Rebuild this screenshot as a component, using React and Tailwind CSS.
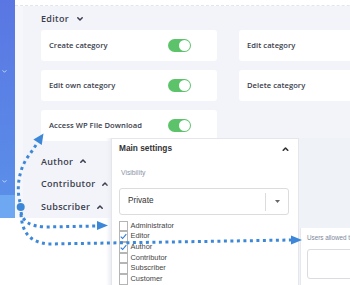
import React from "react";

function Chevron({ up = false, className = "", color = "#3b3e4e", w = 6, h = 4, sw = 1.5 }) {
  return (
    <svg width={w} height={h} viewBox="0 0 6 4" className={className} fill="none">
      {up ? (
        <path d="M0.8 3.3 L3 1 L5.2 3.3" stroke={color} strokeWidth={sw} strokeLinecap="round" strokeLinejoin="round" />
      ) : (
        <path d="M0.8 0.8 L3 3 L5.2 0.8" stroke={color} strokeWidth={sw} strokeLinecap="round" strokeLinejoin="round" />
      )}
    </svg>
  );
}

function Toggle() {
  return (
    <div className="w-[23px] h-[13px] rounded-full bg-[#5cc36b] flex items-center justify-end pr-[1px]">
      <div className="w-[11px] h-[11px] rounded-full bg-white" />
    </div>
  );
}

function Card({ label, toggle }) {
  return (
    <div className="h-[31px] bg-white rounded-[3px] flex items-center justify-between pl-[8px] pr-[26px]">
      <span className="text-[7.6px] font-semibold text-[#3a3d4c] tracking-[0.05px]">{label}</span>
      {toggle && <Toggle />}
    </div>
  );
}

function RoleRow({ label }) {
  return (
    <div className="h-[22.7px] flex items-center">
      <span className="text-[9px] font-semibold text-[#3b3e4e] tracking-[0.3px]">{label}</span>
      <Chevron up className="ml-[7px]" />
    </div>
  );
}

function Check({ label, checked }) {
  return (
    <div className="h-[10.7px] shrink-0 flex items-center">
      <div className="w-[9px] h-[10.7px] border border-[#b5b5b5] bg-white flex items-center justify-center shrink-0 -mb-[1px]">
        {checked && (
          <svg width="8" height="7" viewBox="0 0 8 7" fill="none">
            <path d="M0.8 3.6 L3 5.8 L7.2 0.8" stroke="#2f7ed8" strokeWidth="1.3" />
          </svg>
        )}
      </div>
      {label && (
        <span className="ml-[2.5px] text-[7.4px] text-[#444] leading-none font-['Liberation_Sans',Arial,sans-serif]">{label}</span>
      )}
    </div>
  );
}

export default function App() {
  const blue = "#3d87d8";
  return (
    <div className="relative w-[350px] h-[285px] overflow-hidden bg-white font-['Open_Sans',sans-serif]">
      <div className="flex h-[218px]">
        {/* sidebar */}
        <div className="w-[15px] shrink-0 flex flex-col">
          <div className="h-[195px] bg-gradient-to-b from-[#5a76e2] to-[#5a8ee9] flex flex-col items-start pl-[2px]">
            <Chevron className="mt-[70px]" color="rgba(255,255,255,0.85)" w={5} h={3} sw={1} />
            <Chevron className="mt-[107px]" color="rgba(255,255,255,0.85)" w={5} h={3} sw={1} />
          </div>
          <div className="flex-1 bg-[#6ea7f2]" />
        </div>
        {/* main */}
        <div className="flex-1 bg-[#f2f4f9] border-l-[8px] border-[#f6f7fb] flex flex-col">
          <div className="h-[6px] bg-white border-b border-dashed border-[#e2e5ec] -ml-[8px]" />
          <div className="pl-[18px]">
            <div className="h-[24px] pt-[2px] flex items-center">
              <span className="text-[9px] font-semibold text-[#3b3e4e] tracking-[0.3px]">Editor</span>
              <Chevron className="ml-[8px]" />
            </div>
            <div className="grid grid-cols-[176px_176px] gap-x-[22px] gap-y-[9px]">
              <Card label="Create category" toggle />
              <Card label="Edit category" />
              <Card label="Edit own category" toggle />
              <Card label="Delete category" />
              <Card label="Access WP File Download" toggle />
            </div>
            <div className="mt-[9px] flex flex-col">
              <RoleRow label="Author" />
              <RoleRow label="Contributor" />
              <RoleRow label="Subscriber" />
            </div>
          </div>
        </div>
      </div>

      {/* settings overlay */}
      <div className="absolute left-[106px] top-[138px] w-[244px] h-[147px] flex">
        <div className="w-[5px] shrink-0 bg-gradient-to-r from-transparent to-[#eceef3]" />
        <div className="w-[188px] shrink-0 bg-white border border-[#e4e6eb] border-b-0 flex flex-col pl-[7px] pr-[9px] overflow-hidden font-['Liberation_Sans',Arial,sans-serif]">
          <div className="h-[19px] shrink-0 flex items-center justify-between">
            <span className="text-[8.3px] font-bold text-[#333]">Main settings</span>
            <Chevron up color="#333" w={7} h={4} sw={1.6} />
          </div>
          <div className="mt-[10px] h-[10px] shrink-0 flex items-center pl-[2px] text-[6.8px] text-[#8a94a7]">Visibility</div>
          <div className="mt-[10px] h-[27px] shrink-0 border border-[#dcdcdc] rounded-[3px] flex items-center">
            <span className="pl-[8px] flex-1 text-[8.2px] text-[#333]">Private</span>
            <div className="w-px h-[18px] bg-[#dcdcdc]" />
            <div className="w-[22px] flex justify-center">
              <svg width="5" height="3" viewBox="0 0 5 3"><path d="M0 0 L5 0 L2.5 3 Z" fill="#666" /></svg>
            </div>
          </div>
          <div className="mt-[5px] shrink-0 flex flex-col">
            <Check label="Administrator" />
            <Check label="Editor" checked />
            <Check label="Author" checked />
            <Check label="Contributor" />
            <Check label="Subscriber" />
            <Check label="Customer" />
            <Check label="" />
          </div>
        </div>
        <div className="flex-1 min-w-0 flex flex-col bg-[#eff2f7]">
          <div className="h-[90px] shrink-0" />
          <div className="flex-1 bg-white border-l border-[#e6e8ee] ml-[1px] pl-[6px] pt-[5px] overflow-hidden">
            <div className="text-[6.3px] text-[#7d879a] whitespace-nowrap font-['Liberation_Sans',Arial,sans-serif]">Users allowed to access</div>
            <div className="mt-[7px] h-[30px] w-[60px] border border-[#d9dce2] rounded-[3px] bg-white" />
          </div>
        </div>
      </div>

      {/* dotted arrows */}
      <svg className="absolute left-0 top-0 pointer-events-none" width="350" height="285" viewBox="0 0 350 285" fill="none">
        <path d="M20 202 C 16 188, 19 167, 30 154 L 36 145" stroke={blue} strokeWidth="3" strokeDasharray="3 3.5" />
        <polygon points="43.5,133.5 33.4,139.6 41.7,145.1" fill={blue} />
        <path d="M21 212 C 23 222, 30 226, 45 227 L 97 226" stroke={blue} strokeWidth="3" strokeDasharray="3 3.5" />
        <polygon points="108,225.5 97,221 97,230" fill={blue} />
        <path d="M21 214 C 22 233, 30 242, 48 244 L 291 240" stroke={blue} strokeWidth="3" strokeDasharray="3 3.5" />
        <polygon points="302,240 291,235.5 291,244.5" fill={blue} />
        <circle cx="20.7" cy="207" r="4" fill={blue} />
      </svg>
    </div>
  );
}
